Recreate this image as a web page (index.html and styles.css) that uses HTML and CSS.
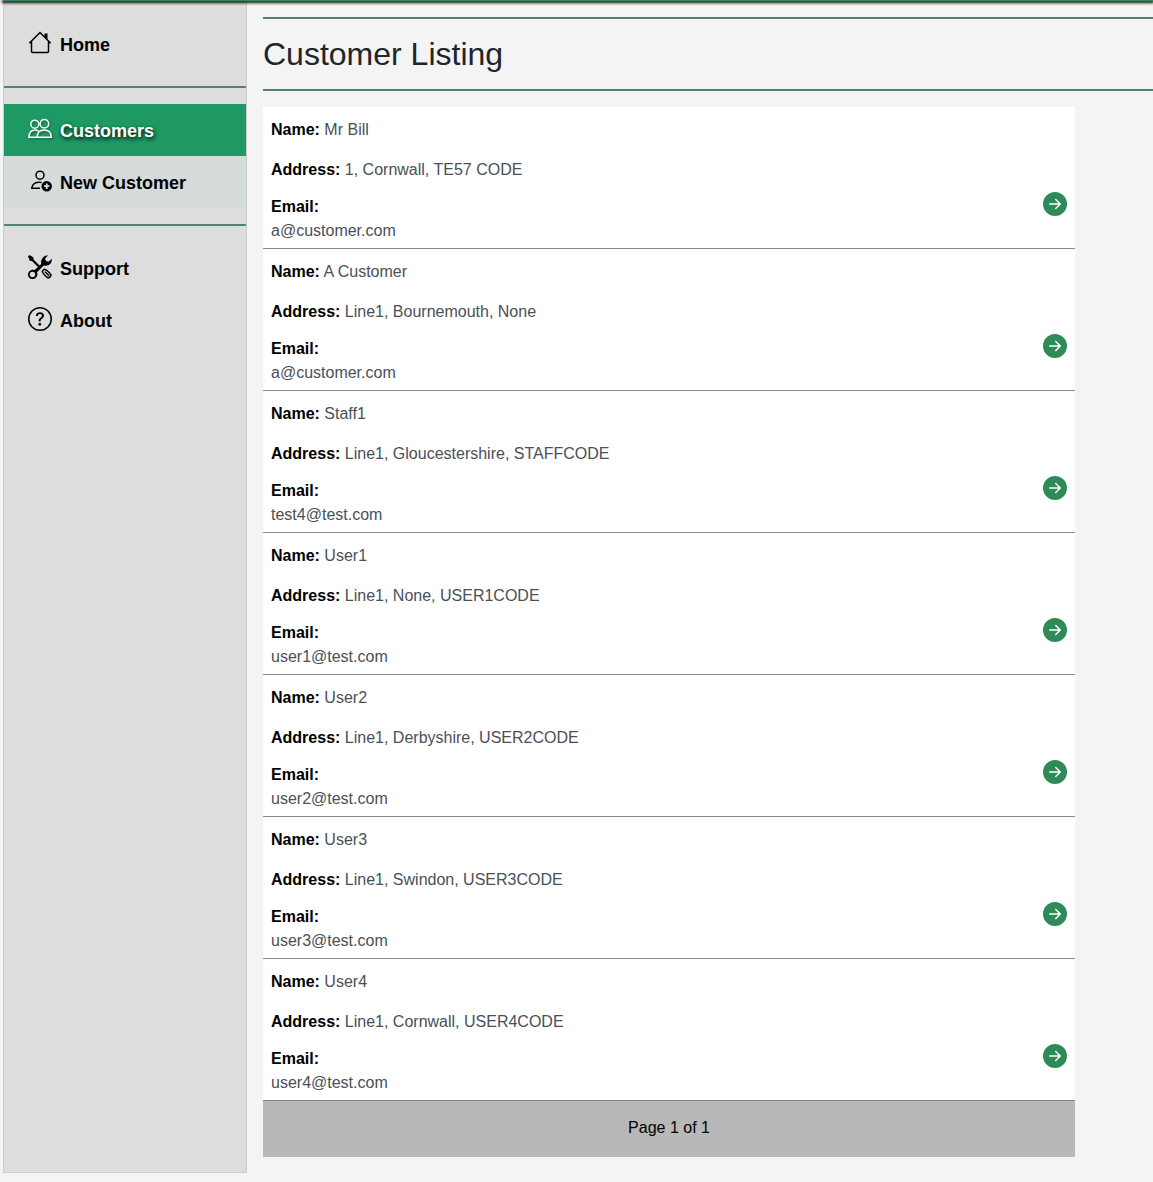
FILE: index.html
```html
<!DOCTYPE html>
<html lang="en">
<head>
<meta charset="utf-8">
<title>Customer Listing</title>
<link rel="stylesheet" href="styles.css">
</head>
<body>
<header class="topbar"></header>
<div class="layout">
<nav class="sidebar">
  <a class="nav-item"><svg class="icon" viewBox="0 0 24 24"><path d="M1.3 12.2 12 1.5l10.7 10.7M3.5 10.5V20.5a1 1 0 0 0 1 1h15a1 1 0 0 0 1-1V10.5"/><path class="solid" d="M16.5 2.5h3v6l-3-3z"/></svg><span>Home</span></a>
  <hr>
  <a class="nav-item active"><svg class="icon" viewBox="0 0 24 24"><circle cx="6.8" cy="7.2" r="4"/><circle cx="16.4" cy="6.8" r="4.3"/><path d="M9 20.2H1c0-5 2.3-7.3 6-7.3 1.4 0 2.6.4 3.5 1.2M9.2 20.2c0-4.8 2.6-7.2 7-7.2s7 2.400 7 7.200z"/></svg><span>Customers</span></a>
  <a class="nav-item sub"><svg class="icon" viewBox="0 0 24 24"><circle cx="12" cy="6.2" r="4"/><path d="M13.500 13.500c-6.500-.8-9.500 1.600-9.800 5.800H12"/><circle class="solid" cx="18.700" cy="17.200" r="5.200"/><path class="plus" d="M18.700 14.500v5.400M16 17.200h5.400"/></svg><span>New Customer</span></a>
  <hr>
  <a class="nav-item"><svg class="icon" viewBox="0 0 24 24"><path class="solid" d="M0 1.500 1.500 0 5.500 2.600v2l6 6 1.700-1.700c-.8-3.500 1.500-8.300 6.800-8.700l-3 3.500 1 2.200 2.500.8 3.300-3c.5 5-3.500 8-8.100 6.800L9 17.200c1.500 4-1.500 6.800-4.500 6.800C1.700 24 0 22 0 19.500c0-3 3-5.500 6.600-4.500l3.400-3-6-6H2z"/><circle class="hole" cx="4.500" cy="19.500" r="2.700"/><path d="m14.300 16.200 2-2c2 .2 4.500 2.800 6.500 5.200.7 1.500-1.700 4-3.300 3.300-2.400-2-5-4.500-5.200-6.500zM17 16.700l4 4"/></svg><span>Support</span></a>
  <a class="nav-item"><svg class="icon" viewBox="0 0 16 16"><path class="solid" d="M8 15A7 7 0 1 1 8 1a7 7 0 0 1 0 14m0 1A8 8 0 1 0 8 0a8 8 0 0 0 0 16"/><path class="solid" d="M5.255 5.786a.237.237 0 0 0 .241.247h.825c.138 0 .248-.113.266-.25.09-.656.54-1.134 1.342-1.134.686 0 1.314.343 1.314 1.168 0 .635-.374.927-.965 1.371-.673.489-1.206 1.060-1.168 1.987l.003.217a.25.25 0 0 0 .25.246h.811a.25.25 0 0 0 .25-.25v-.105c0-.718.273-.927 1.010-1.486.609-.463 1.244-.977 1.244-2.056 0-1.511-1.276-2.241-2.673-2.241-1.267 0-2.655.59-2.750 2.286m1.557 5.763c0 .533.425.927 1.010.927.609 0 1.028-.394 1.028-.927 0-.552-.420-.940-1.029-.940-.584 0-1.009.388-1.009.940"/></svg><span>About</span></a>
</nav>
<main class="content">
  <h1>Customer Listing</h1>
  <div id="list" class="list"></div>
</main>
</div>
<script src="app.js"></script>
</body>
</html>
```
FILE: styles.css
```css
* { box-sizing: border-box; }
body { margin: 0; background: #f4f4f4; font: 16px/24px "Liberation Sans", Arial, sans-serif; color: #212529; overflow: hidden; }
.topbar { position: relative; z-index: 1; height: 1px; margin-left: 3px; background: #2e8b57; box-shadow: 0 1px 3px 1px #000; }
.layout { display: flex; }
.sidebar { width: 244px; height: 1172px; margin-left: 3px; padding-top: 17px; background: #ddd; border: 1px solid #ccc; border-top: 0; }
.nav-item { display: flex; align-items: center; gap: 8px; height: 52px; padding: 0 24px; color: #000; font-size: 18px; font-weight: 700; }
.nav-item span { padding-top: 1px; }
.nav-item.active { background: #1e9964; color: #fff; text-shadow: 1px 2px 4px #000; }
.nav-item.sub { background: #d5dbda; }
hr { height: 2px; margin: 16px 0; border: 0; background: #52846a; }
.icon { width: 24px; height: 24px; margin-top: -2px; fill: none; stroke: currentColor; stroke-width: 1.500; flex: none; }
.icon .solid { fill: currentColor; stroke: none; }
.icon .hole { fill: #ddd; stroke: none; }
.icon .plus { stroke: #d5dbda; stroke-width: 1.800; }
.active .icon { filter: drop-shadow(1px 1px 1px #0006); }
.content { flex: 1; padding: 16px 0 0 16px; }
h1 { height: 74px; margin: 0 0 16px; border: solid #52846a; border-width: 2px 0; font-size: 32px; font-weight: 400; line-height: 70px; }
.list { width: 812px; background: #fff; }
.row { display: flex; justify-content: space-between; align-items: flex-end; height: 142px; padding: 0 8px 5px; border-bottom: 1px solid #888; color: #495057; }
.row p { margin: 0 0 16px; }
.row .email { margin: -3px 0 0; }
.row b { color: #000; }
.go { width: 24px; height: 24px; margin-bottom: 27px; fill: #2e8b57; }
.pager { height: 56px; line-height: 54px; text-align: center; background: #b8b8b8; color: #000; }
```
FILE: app.js
```js
const customers = [
  ["Mr Bill", "1, Cornwall, TE57 CODE", "a@customer.com"],
  ["A Customer", "Line1, Bournemouth, None", "a@customer.com"],
  ["Staff1", "Line1, Gloucestershire, STAFFCODE", "test4@test.com"],
  ["User1", "Line1, None, USER1CODE", "user1@test.com"],
  ["User2", "Line1, Derbyshire, USER2CODE", "user2@test.com"],
  ["User3", "Line1, Swindon, USER3CODE", "user3@test.com"],
  ["User4", "Line1, Cornwall, USER4CODE", "user4@test.com"]
];
document.getElementById("list").innerHTML = customers.map(([name, address, email]) => `
<section class="row"><div><p><b>Name:</b> ${name}</p><p><b>Address:</b> ${address}</p><p class="email"><b>Email:</b><br>${email}</p></div>
<svg class="go" viewBox="0 0 16 16"><path d="M8 0a8 8 0 1 1 0 16A8 8 0 0 1 8 0M4.500 7.500a.5.5 0 0 0 0 1h5.793l-2.147 2.146a.5.5 0 0 0 .708.708l3-3a.5.5 0 0 0 0-.708l-3-3a.5.5 0 1 0-.708.708L10.293 7.500z"/></svg></section>`).join("") + '<footer class="pager">Page 1 of 1</footer>';
```
